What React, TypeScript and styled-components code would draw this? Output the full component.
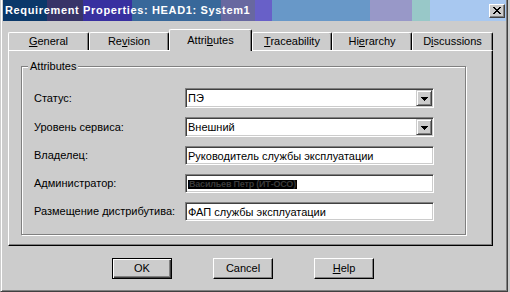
import React from "react";
import styled, { createGlobalStyle } from "styled-components";

const Global = createGlobalStyle`
  html, body {
    margin: 0;
    padding: 0;
    background: #cccccc;
    width: 510px;
    height: 292px;
    overflow: hidden;
  }
  body {
    font-family: "Liberation Sans", Arial, sans-serif;
    font-size: 11px;
    color: #000;
  }
  u { text-underline-offset: 1px; }
`;

const Window = styled.div`
  width: 508px;
  height: 292px;
  box-sizing: border-box;
  background: #cccccc;
  border-left: 1px solid #cccccc;
  border-right: 1px solid #404040;
  border-bottom: 1px solid #404040;
  box-shadow: inset 1px 0 0 #ffffff, inset -1px -1px 0 #808080;
  padding: 0 1px 0 2px;
  display: flex;
  flex-direction: column;
`;

const TitleBar = styled.div`
  height: 21px;
  flex: none;
  display: flex;
  align-items: center;
  padding: 0 1px 0 2px;
  background: linear-gradient(
    to right,
    #0a386a 0px, #0a386a 44px,
    #383468 44px, #383468 80px,
    #3830a0 80px, #3830a0 129px,
    #38689a 129px, #38689a 218px,
    #6868a0 218px, #6868a0 252px,
    #6860c8 252px, #6860c8 269px,
    #6898c8 269px, #6898c8 367px,
    #9898c8 367px, #9898c8 409px,
    #98c8c8 409px, #98c8c8 427px,
    #a8c8f0 427px, #a8c8f0 100%
  );
`;

const Title = styled.span`
  color: #ffffff;
  font-weight: bold;
  font-size: 11px;
  letter-spacing: 0.65px;
  line-height: 13px;
  white-space: nowrap;
`;

const CloseButton = styled.div`
  margin-left: auto;
  margin-top: 1px;
  width: 16px;
  height: 14px;
  box-sizing: border-box;
  background: #cccccc;
  border-top: 1px solid #ffffff;
  border-left: 1px solid #ffffff;
  border-right: 1px solid #404040;
  border-bottom: 1px solid #404040;
  box-shadow: inset -1px -1px 0 #808080;
  display: flex;
  align-items: center;
  justify-content: center;
  padding: 0 1px 1px 0;
`;

const TabRow = styled.div`
  display: flex;
  align-items: flex-end;
  height: 21px;
  margin: 8px 0 0 5px;
  flex: none;
`;

const Tab = styled.div<{ $w: number; $active?: boolean }>`
  position: relative;
  z-index: ${(p) => (p.$active ? 1 : 0)};
  width: ${(p) => p.$w}px;
  height: ${(p) => (p.$active ? 22 : 18)}px;
  margin-bottom: ${(p) => (p.$active ? -1 : 0)}px;
  box-sizing: border-box;
  background: #cccccc;
  border-top: 1px solid #ffffff;
  border-left: 1px solid #ffffff;
  border-right: 1px solid #000000;
  border-radius: 2px 2px 0 0;
  box-shadow: inset -1px 0 0 #808080;
  text-align: center;
  line-height: 13px;
  padding-top: ${(p) => (p.$active ? 4 : 2)}px;
  white-space: nowrap;
`;

const Panel = styled.div`
  margin-left: 5px;
  width: 485px;
  height: 196px;
  flex: none;
  box-sizing: border-box;
  border-top: 1px solid #ffffff;
  border-left: 1px solid #ffffff;
  border-right: 1px solid #000000;
  border-bottom: 1px solid #000000;
  box-shadow: inset -1px -1px 0 #808080;
  padding: 15px 0 0 12px;
`;

const GroupBox = styled.div`
  position: relative;
  width: 445px;
  height: 169px;
  box-sizing: border-box;
  border: 1px solid #808080;
  box-shadow: inset 1px 1px 0 #ffffff, 1px 1px 0 #ffffff;
  padding: 21px 0 0 12px;
`;

const Legend = styled.span`
  position: absolute;
  top: -7px;
  left: 6px;
  padding: 0 2px;
  background: #cccccc;
  line-height: 13px;
`;

const Form = styled.div`
  display: grid;
  grid-template-columns: 151px 249px;
  row-gap: 9px;
  align-items: center;
`;

const Label = styled.span`
  line-height: 13px;
  white-space: nowrap;
`;

const Field = styled.div<{ $h: number }>`
  width: 249px;
  height: ${(p) => p.$h}px;
  box-sizing: border-box;
  background: #ffffff;
  border-top: 1px solid #808080;
  border-left: 1px solid #808080;
  border-bottom: 1px solid #ffffff;
  border-right: 1px solid #ffffff;
  box-shadow: inset 1px 1px 0 #404040, inset -1px -1px 0 #cccccc;
  padding: 0 1px 0 2px;
  display: flex;
  align-items: center;
  line-height: 13px;
  white-space: nowrap;
  overflow: hidden;
`;

const FieldText = styled.span`
  flex: 1;
  padding-top: 1px;
`;

const DropButton = styled.div`
  width: 16px;
  height: 16px;
  flex: none;
  box-sizing: border-box;
  background: #cccccc;
  border-top: 1px solid #cccccc;
  border-left: 1px solid #cccccc;
  border-right: 1px solid #404040;
  border-bottom: 1px solid #404040;
  box-shadow: inset 1px 1px 0 #ffffff, inset -1px -1px 0 #808080;
  display: flex;
  align-items: center;
  justify-content: center;
  padding: 1px 0 0 1px;
`;

const Redacted = styled.span`
  display: inline-block;
  height: 9px;
  line-height: 9px;
  padding: 0 1px;
  background: #000000;
  color: #3a3a3a;
  font-size: 9px;
  font-weight: bold;
  letter-spacing: -0.2px;
  white-space: nowrap;
  margin-top: 1px;
`;

const ButtonRow = styled.div`
  display: flex;
  gap: 41px;
  margin: 12px 0 0 109px;
`;

const Button = styled.div<{ $default?: boolean }>`
  width: 60px;
  height: 21px;
  box-sizing: border-box;
  display: flex;
  align-items: center;
  justify-content: center;
  line-height: 13px;
  background: #cccccc;
  ${(p) =>
    p.$default
      ? `border: 1px solid #000000;
         box-shadow: inset 1px 1px 0 #ffffff, inset -1px -1px 0 #404040, inset -2px -2px 0 #808080;`
      : `border-top: 1px solid #ffffff;
         border-left: 1px solid #ffffff;
         border-right: 1px solid #000000;
         border-bottom: 1px solid #000000;
         box-shadow: inset -1px -1px 0 #808080;`}
`;

const CloseIcon = () => (
  <svg width="8" height="7" viewBox="0 0 8 7" shapeRendering="crispEdges">
    <path
      fill="#000"
      d="M0 0h2v1h-2z M6 0h2v1h-2z M1 1h2v1h-2z M5 1h2v1h-2z M2 2h4v1h-4z M3 3h2v1h-2z M2 4h4v1h-4z M1 5h2v1h-2z M5 5h2v1h-2z M0 6h2v1h-2z M6 6h2v1h-2z"
    />
  </svg>
);

const ArrowIcon = () => (
  <svg width="7" height="4" viewBox="0 0 7 4" shapeRendering="crispEdges">
    <path fill="#000" d="M0 0h7v1h-7z M1 1h5v1h-5z M2 2h3v1h-3z M3 3h1v1h-1z" />
  </svg>
);

const tabs: { w: number; label: React.ReactNode; active?: boolean }[] = [
  { w: 81, label: <><u>G</u>eneral</> },
  { w: 80, label: <>Re<u>v</u>ision</> },
  { w: 83, label: <>Attri<u>b</u>utes</>, active: true },
  { w: 80, label: <><u>T</u>raceability</> },
  { w: 80, label: <>Hi<u>e</u>rarchy</> },
  { w: 81, label: <>D<u>i</u>scussions</> },
];

export default function App() {
  return (
    <>
      <Global />
      <Window>
        <TitleBar>
          <Title>Requirement Properties: HEAD1: System1</Title>
          <CloseButton>
            <CloseIcon />
          </CloseButton>
        </TitleBar>
        <TabRow>
          {tabs.map((t, i) => (
            <Tab key={i} $w={t.w} $active={t.active}>
              {t.label}
            </Tab>
          ))}
        </TabRow>
        <Panel>
          <GroupBox>
            <Legend>Attributes</Legend>
            <Form>
              <Label>Статус:</Label>
              <Field $h={20}>
                <FieldText>ПЭ</FieldText>
                <DropButton>
                  <ArrowIcon />
                </DropButton>
              </Field>
              <Label>Уровень сервиса:</Label>
              <Field $h={20}>
                <FieldText>Внешний</FieldText>
                <DropButton>
                  <ArrowIcon />
                </DropButton>
              </Field>
              <Label>Владелец:</Label>
              <Field $h={19}>
                <FieldText>Руководитель службы эксплуатации</FieldText>
              </Field>
              <Label>Администратор:</Label>
              <Field $h={19}>
                <Redacted>Васильев Петр (ИТ-ОСО)</Redacted>
              </Field>
              <Label>Размещение дистрибутива:</Label>
              <Field $h={19}>
                <FieldText>ФАП службы эксплуатации</FieldText>
              </Field>
            </Form>
          </GroupBox>
        </Panel>
        <ButtonRow>
          <Button $default>OK</Button>
          <Button>Cancel</Button>
          <Button>
            <span>
              <u>H</u>elp
            </span>
          </Button>
        </ButtonRow>
      </Window>
    </>
  );
}
